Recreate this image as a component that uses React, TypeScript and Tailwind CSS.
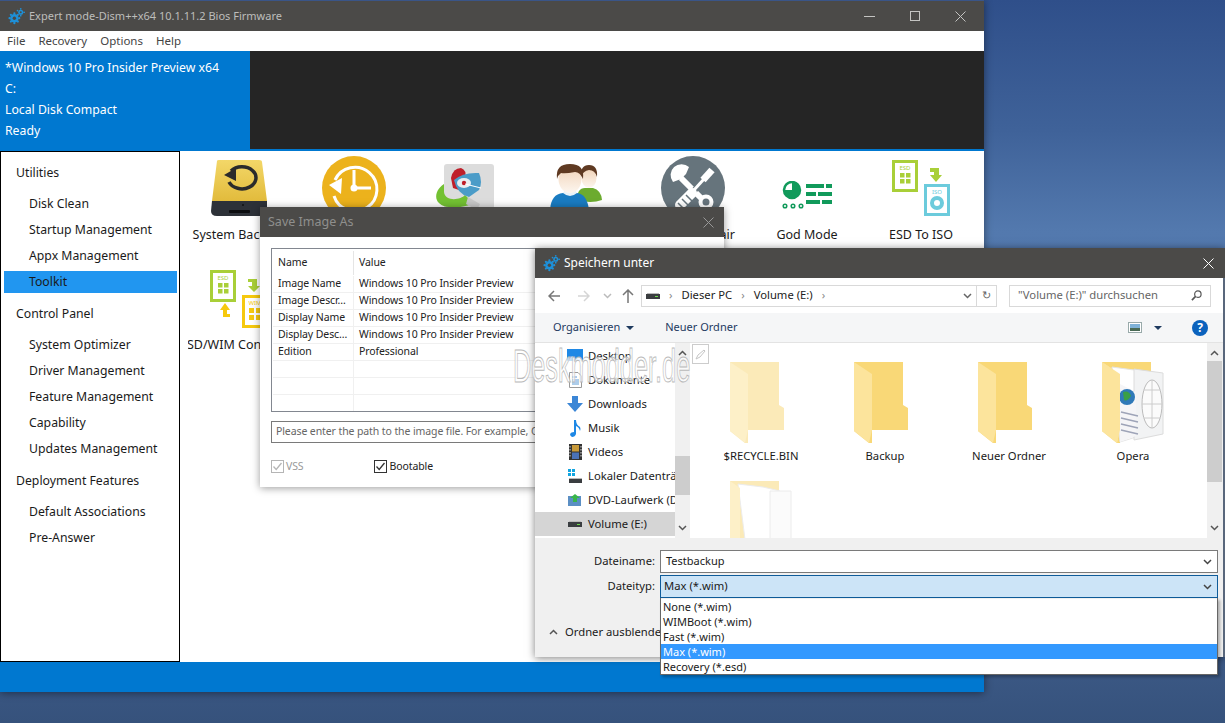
const FONT = "font-['Noto_Sans',sans-serif]";

function Gears({ size = 20 }: { size?: number }) {
  return (
    <svg width={size} height={size} viewBox="0 0 20 20">
      <g fill="#1e90d8">
        <circle cx="7.5" cy="12" r="5" />
        <circle cx="7.5" cy="6.2" r="1.3" />
        <circle cx="7.5" cy="17.8" r="1.3" />
        <circle cx="1.8" cy="12" r="1.3" />
        <circle cx="13.2" cy="12" r="1.3" />
        <circle cx="3.4" cy="8" r="1.3" />
        <circle cx="11.6" cy="8" r="1.3" />
        <circle cx="3.4" cy="16" r="1.3" />
        <circle cx="11.6" cy="16" r="1.3" />
        <circle cx="15" cy="5" r="3" />
        <circle cx="15" cy="1" r="1" />
        <circle cx="19" cy="5" r="1" />
        <circle cx="11.2" cy="3" r="1" />
        <circle cx="15" cy="9" r="1" />
      </g>
      <circle cx="7.5" cy="12" r="2" fill="#4b4a48" />
      <circle cx="15" cy="5" r="1.2" fill="#4b4a48" />
    </svg>
  );
}

function DriveIcon() {
  return (
    <svg width="57" height="56" viewBox="0 0 57 56" className="ml-[4px]">
      <defs>
        <linearGradient id="driveBody" x1="0" y1="0" x2="0" y2="1">
          <stop offset="0" stopColor="#f3d768" />
          <stop offset="1" stopColor="#e2bb3c" />
        </linearGradient>
      </defs>
      <path d="M6 1Q6 0 8 0H48Q51 0 51 2L56 41H1Z" fill="url(#driveBody)" />
      <path d="M1 41H56V51Q56 56 51 56H6Q0 56 0 51Z" fill="#2d3138" />
      <rect x="18" y="50" width="21" height="3" rx="1" fill="#0c0d10" />
      <circle cx="32" cy="45" r="1" fill="#111" />
      <path d="M18 22A14 11 0 1 0 20 11" fill="none" stroke="#2b2b2b" strokeWidth="3.5" />
      <path d="M13 15L25 8L25 21Z" fill="#2b2b2b" />
    </svg>
  );
}

function ClockIcon() {
  return (
    <svg width="64" height="64" viewBox="0 0 64 64" className="ml-[6px]">
      <circle cx="32" cy="32" r="32" fill="#ecb21c" />
      <path d="M13 24A22 22 0 1 1 12 40" fill="none" stroke="#fff" strokeWidth="3" />
      <path d="M7 29L20 22L19 38Z" fill="#fff" />
      <path d="M32 14V32H49" fill="none" stroke="#fff" strokeWidth="3" />
      <circle cx="32" cy="32" r="3.5" fill="#fff" />
    </svg>
  );
}

function BootIcon() {
  return (
    <svg width="60" height="56" viewBox="0 0 60 56" className="overflow-visible">
      <rect x="9" y="0" width="50" height="52" rx="3" fill="#dcdcdc" />
      <path d="M9 20C-3 28 -1 42 14 43C24 44 34 42 38 39L30 31C26 36 10 38 9 28Z" fill="#73c132" />
      <path d="M16 14Q18 4 26 4Q32 6 30 14L24 26L18 24Z" fill="#bf1f2a" />
      <path d="M19 16Q28 8 44 9Q48 18 44 26L34 33Q22 30 19 16Z" fill="#4b9cc8" />
      <ellipse cx="29" cy="19" rx="7" ry="5" fill="#e9eef2" />
      <circle cx="29" cy="19" r="2.2" fill="#bf1f2a" />
      <path d="M30 20L46 24" stroke="#fff" strokeWidth="1" />
      <path d="M33 33L45 40L42 46L31 40Z" fill="#c8c8c8" />
    </svg>
  );
}

function UsersIcon() {
  return (
    <svg width="60" height="56" viewBox="0 0 60 56">
      <defs>
        <linearGradient id="faceFade" x1="0" y1="0" x2="0" y2="1">
          <stop offset="0" stopColor="#f0d2b6" />
          <stop offset="1" stopColor="#fdf6ef" />
        </linearGradient>
      </defs>
      <path d="M28 36Q28 24 36 24L44 24Q52 26 53 36Q42 40 28 36Z" fill="#6cab2f" />
      <ellipse cx="40" cy="14" rx="7.5" ry="10" fill="url(#faceFade)" />
      <path d="M32 13Q31 1 40 1Q49 1 48 13Q46 6 40 6Q34 7 32 13Z" fill="#5f3a22" />
      <path d="M1 46Q2 30 14 29L28 29Q38 30 40 46Z" fill="#1a7cc2" />
      <path d="M14 29Q21 35 28 29L26 26L16 26Z" fill="#eaf3f8" />
      <ellipse cx="21" cy="15" rx="11.5" ry="14" fill="url(#faceFade)" />
      <path d="M8 15Q6 0 21 0Q36 0 34 15Q31 8 26 8Q16 10 12 9Q9 11 8 15Z" fill="#5f3a22" />
    </svg>
  );
}

function ToolsIcon() {
  return (
    <svg width="64" height="64" viewBox="0 0 64 64">
      <circle cx="32" cy="32" r="32" fill="#66747c" />
      <path d="M20 22L40 42" stroke="#fff" strokeWidth="6" />
      <path d="M28 11A11 11 0 0 0 12 26L20 23L25 18Z" fill="#fff" />
      <circle cx="45" cy="46" r="5.5" fill="none" stroke="#fff" strokeWidth="4" />
      <path d="M31 37L43 24" stroke="#66747c" strokeWidth="6" />
      <path d="M33 34L43 23" stroke="#fff" strokeWidth="3" />
      <path d="M42 24L51 14" stroke="#fff" strokeWidth="7" />
      <path d="M19 49L31 37" stroke="#fff" strokeWidth="10" strokeLinecap="round" />
      <path d="M17 47L23 53M21 43L27 49M25 39L31 45" stroke="#66747c" strokeWidth="1.5" />
    </svg>
  );
}

function GodModeIcon() {
  return (
    <svg width="50" height="28" viewBox="0 0 50 28">
      <circle cx="10" cy="9" r="8" fill="none" stroke="#119a5b" strokeWidth="2.5" />
      <path d="M10 9V1A8 8 0 1 1 2 9Z" fill="#119a5b" />
      <g fill="none" stroke="#119a5b" strokeWidth="1.5">
        <circle cx="3" cy="25" r="1.8" />
        <circle cx="11" cy="25" r="1.8" />
        <circle cx="19" cy="25" r="1.8" />
      </g>
      <g fill="#119a5b">
        <rect x="24" y="3" width="18" height="4" />
        <rect x="44" y="3" width="6" height="4" />
        <rect x="24" y="11" width="10" height="4" />
        <rect x="36" y="11" width="14" height="4" />
        <rect x="24" y="19" width="14" height="4" />
        <rect x="40" y="19" width="10" height="4" />
      </g>
    </svg>
  );
}

function TinyLabel({ x, y, color, children }: { x: number; y: number; color: string; children: string }) {
  return (
    <text x={x} y={y} fontSize="6" textAnchor="middle" fill={color}>
      {children}
    </text>
  );
}

function EsdIsoIcon() {
  return (
    <svg width="58" height="56" viewBox="0 0 58 56">
      <rect x="1.5" y="1.5" width="23" height="29" fill="#fff" stroke="#a9cf38" strokeWidth="3" />
      <TinyLabel x={13} y={10} color="#a9cf38">
        ESD
      </TinyLabel>
      <g fill="#a9cf38">
        <rect x="8" y="13" width="4.5" height="4.5" />
        <rect x="14" y="13" width="4.5" height="4.5" />
        <rect x="8" y="19" width="4.5" height="4.5" />
        <rect x="14" y="19" width="4.5" height="4.5" />
      </g>
      <path d="M38 8H47V15H50L44 22L38 15H42V12H38Z" fill="#a9cf38" />
      <rect x="33.5" y="25.5" width="23" height="29" fill="#fff" stroke="#6ccbdc" strokeWidth="3" />
      <TinyLabel x={45} y={34} color="#6ccbdc">
        ISO
      </TinyLabel>
      <circle cx="45" cy="43" r="5" fill="none" stroke="#6ccbdc" strokeWidth="4" />
    </svg>
  );
}

function EsdWimIcon() {
  return (
    <svg width="60" height="58" viewBox="0 0 60 58" className="ml-[6px]">
      <rect x="1.5" y="1.5" width="23" height="29" fill="#fff" stroke="#a9cf38" strokeWidth="3" />
      <TinyLabel x={13} y={10} color="#a9cf38">
        ESD
      </TinyLabel>
      <g fill="#a9cf38">
        <rect x="8" y="13" width="4.5" height="4.5" />
        <rect x="14" y="13" width="4.5" height="4.5" />
        <rect x="8" y="19" width="4.5" height="4.5" />
        <rect x="14" y="19" width="4.5" height="4.5" />
      </g>
      <path d="M13 47V40H10L15 33L20 40H17V44H20V47Z" fill="#f6c90e" />
      <path d="M38 9H47V16H50L44 22L38 16H42V12H38Z" fill="#a9cf38" />
      <rect x="33.5" y="26.5" width="24" height="30" fill="#fff" stroke="#f6c90e" strokeWidth="3" />
      <TinyLabel x={45} y={35} color="#f6c90e">
        WIM
      </TinyLabel>
      <g fill="#f6c90e">
        <rect x="39" y="38" width="5" height="5" />
        <rect x="46" y="38" width="5" height="5" />
        <rect x="39" y="45" width="5" height="5" />
        <rect x="46" y="45" width="5" height="5" />
      </g>
    </svg>
  );
}

type FolderKind = "plain" | "pale" | "opera" | "papers";

function Folder({ kind = "plain" }: { kind?: FolderKind }) {
  const pale = kind === "pale" || kind === "papers";
  const flap = <path d="M0 0L18 12V68L15 81L0 69Z" fill={pale ? "#fdf0c8" : "#fce49c"} />;
  return (
    <svg width="62" height="82" viewBox="0 0 62 82">
      <path d="M0 0H49V43L54 46V68H18V81H15L0 69Z" fill={pale ? "#fbeab8" : "#f9d877"} />
      {kind === "papers" && (
        <>
          <path d="M8 3L33 6L50 10V82H18Z" fill="#fff" stroke="#ececec" />
          <path d="M40 10H61V82H40Z" fill="#fbfbfb" stroke="#ececec" />
        </>
      )}
      {kind === "papers" ? null : flap}
      {kind === "opera" && (
        <>
          <path d="M10 5L32 8L50 12V70L18 80Z" fill="#fff" stroke="#e5e5e5" />
          <path d="M32 7L61 11V72L32 78Z" fill="#f2f3f4" stroke="#dcdcdc" />
          <ellipse cx="50" cy="42" rx="10" ry="24" fill="#fbfbfb" stroke="#bbb" />
          <path d="M40 42H60M50 18V66M42 28H58M42 56H58" stroke="#ccc" fill="none" />
          <path d="M18 22L34 30V74L18 80Z" fill="#f5f5f7" />
          <circle cx="25" cy="35" r="8" fill="#2f79b8" />
          <path d="M21 30Q27 28 29 34Q25 40 22 38Z" fill="#3a9f46" />
          <path d="M19 50L36 54M19 56L36 60M19 62L36 66M19 68L36 72" stroke="#9ea4b8" strokeWidth="1.5" />
          {flap}
        </>
      )}
      {kind === "papers" && <path d="M0 0L10 7V72L0 69Z" fill="#fdf0c8" />}
    </svg>
  );
}

function NavIcon({ kind }: { kind: string }) {
  if (kind === "desktop")
    return (
      <svg width="16" height="14" viewBox="0 0 16 14">
        <rect width="16" height="12" fill="#1e88e5" />
        <path d="M0 12L5 7L9 10L12 8L16 12Z" fill="#bfe0fa" />
      </svg>
    );
  if (kind === "docs")
    return (
      <svg width="13" height="16" viewBox="0 0 13 16">
        <path d="M.5.5H9L12.5 4V15.5H.5Z" fill="#fff" stroke="#9a9a9a" />
        <path d="M3 5H8M3 8H10M3 10H10M3 12H10" stroke="#5b9bd5" />
      </svg>
    );
  if (kind === "down")
    return (
      <svg width="16" height="16" viewBox="0 0 16 16">
        <path d="M5 0H11V7H16L8 16L0 7H5Z" fill="#3b86d6" />
      </svg>
    );
  if (kind === "music")
    return (
      <svg width="11" height="17" viewBox="0 0 11 17">
        <path d="M4 0H6Q6 5 10 7Q11 9 10 11Q9 7 6 6V14Q5 17 2 17Q0 16 0 14Q1 12 4 12Z" fill="#1e88e5" />
      </svg>
    );
  if (kind === "video")
    return (
      <svg width="13" height="16" viewBox="0 0 13 16">
        <rect width="13" height="16" fill="#333" />
        <rect x="3" y="1" width="7" height="6.5" fill="#c89a3a" />
        <rect x="3" y="8.5" width="7" height="6.5" fill="#4a72b8" />
        <path d="M1 2V14M12 2V14" stroke="#ddd" strokeDasharray="1.5 1.5" />
      </svg>
    );
  if (kind === "win")
    return (
      <svg width="15" height="14" viewBox="0 0 15 14">
        <rect y="0" width="3" height="3" fill="#12a5e0" />
        <rect x="4" y="0" width="3" height="3" fill="#12a5e0" />
        <rect y="4" width="3" height="3" fill="#12a5e0" />
        <rect x="4" y="4" width="3" height="3" fill="#12a5e0" />
        <path d="M1 9H14V10H1Z" fill="#b8b8b8" />
        <rect x="1" y="10" width="13" height="4" fill="#3a3d40" />
      </svg>
    );
  if (kind === "dvd")
    return (
      <svg width="14" height="13" viewBox="0 0 14 13">
        <rect y="2" width="13" height="10" fill="#5b8fc4" />
        <path d="M7 0L12 4H9V8H5V4H2Z" fill="#39b54a" />
      </svg>
    );
  return (
    <svg width="14" height="6" viewBox="0 0 14 6">
      <path d="M1 0H13V1H1Z" fill="#bbb" />
      <rect y="1" width="14" height="5" fill="#3a3d40" />
      <rect x="9" y="3" width="3" height="1" fill="#6fdc4c" />
    </svg>
  );
}

const menus = ["File", "Recovery", "Options", "Help"];
const statusLines = ["*Windows 10 Pro Insider Preview x64", "C:", "Local Disk Compact", "Ready"];

const sidebar = [
  { title: "Utilities", items: ["Disk Clean", "Startup Management", "Appx Management", "Toolkit"] },
  {
    title: "Control Panel",
    items: ["System Optimizer", "Driver Management", "Feature Management", "Capability", "Updates Management"],
  },
  { title: "Deployment Features", items: ["Default Associations", "Pre-Answer"] },
];

const tools = [
  { label: "System Backup", icon: <DriveIcon />, top: "pt-[9px]" },
  { label: "System Restore", icon: <ClockIcon />, top: "pt-[5px]" },
  { label: "Boot Manager", icon: <BootIcon />, top: "pt-[13px]" },
  { label: "Account Manager", icon: <UsersIcon />, top: "pt-[13px]" },
  { label: "System Repair", icon: <ToolsIcon />, top: "pt-[5px]" },
  { label: "God Mode", icon: <GodModeIcon />, top: "pt-[30px]" },
  { label: "ESD To ISO", icon: <EsdIsoIcon />, top: "pt-[9px]" },
];

const imageRows = [
  ["Image Name", "Windows 10 Pro Insider Preview"],
  ["Image Descr...", "Windows 10 Pro Insider Preview"],
  ["Display Name", "Windows 10 Pro Insider Preview"],
  ["Display Desc...", "Windows 10 Pro Insider Preview"],
  ["Edition", "Professional"],
  ["", ""],
  ["", ""],
  ["", ""],
];

const navItems = [
  ["desktop", "Desktop"],
  ["docs", "Dokumente"],
  ["down", "Downloads"],
  ["music", "Musik"],
  ["video", "Videos"],
  ["win", "Lokaler Datenträ"],
  ["dvd", "DVD-Laufwerk (D"],
  ["drive", "Volume (E:)"],
];

const fileTypes = ["None (*.wim)", "WIMBoot (*.wim)", "Fast (*.wim)", "Max (*.wim)", "Recovery (*.esd)"];

function Chevron({ up = false, color = "#555" }: { up?: boolean; color?: string }) {
  return (
    <svg width="9" height="6" viewBox="0 0 9 6">
      <path d={up ? "M1 5L4.5 1.5L8 5" : "M1 1L4.5 4.5L8 1"} fill="none" stroke={color} strokeWidth="1.5" />
    </svg>
  );
}

function CloseX({ color, size = 11 }: { color: string; size?: number }) {
  return (
    <svg width={size} height={size} viewBox="0 0 11 11">
      <path d="M.5.5L10.5 10.5M10.5.5L.5 10.5" stroke={color} strokeWidth="1" />
    </svg>
  );
}

function CheckBox({ disabled = false }: { disabled?: boolean }) {
  const c = disabled ? "#b5b5b5" : "#333";
  return (
    <svg width="13" height="13" viewBox="0 0 13 13">
      <rect x=".5" y=".5" width="12" height="12" fill="#fff" stroke={c} />
      <path d="M2.5 6.5L5.2 9.5L10.5 3" fill="none" stroke={c} strokeWidth="1.3" />
    </svg>
  );
}

function MainWindow() {
  return (
    <div className="absolute left-0 top-0 flex h-[692px] w-[984px] flex-col bg-white shadow-[0_1px_8px_rgba(0,0,0,0.45)]">
      <div className="h-px bg-[#3a5588]" />
      <div className="flex h-[30px] items-center bg-[#4b4a48] pl-[8px]">
        <Gears size={17} />
        <span className="ml-[4px] text-[11px] text-[#bdbdbb]">Expert mode-Dism++x64 10.1.11.2 Bios Firmware</span>
        <div className="ml-auto flex items-center gap-[35px] pr-[18px]">
          <div className="h-px w-[11px] bg-[#c4c4c2]" />
          <div className="size-[10px] border border-[#c4c4c2]" />
          <CloseX color="#c4c4c2" />
        </div>
      </div>
      <div className="flex h-[20px] items-center gap-[13px] pl-[7px] text-[11.5px] text-[#444]">
        {menus.map((m) => (
          <span key={m}>{m}</span>
        ))}
      </div>
      <div className="flex h-[100px] border-b-2 border-[#0078d0] bg-[#0078d0]">
        <div className="flex w-[250px] flex-col pl-[5px] pt-[6px] text-[12.25px] leading-[21px] text-white">
          {statusLines.map((l) => (
            <div key={l}>{l}</div>
          ))}
        </div>
        <div className="flex-1 bg-[#252525]" />
      </div>
      <div className="flex flex-1">
        <div className="w-[180px] border border-black pl-[3px] pr-[2px] pt-[9px] text-[12.25px] text-[#1a1a1a]">
          {sidebar.map((s) => (
            <div key={s.title} className="mb-[9px]">
              <div className="flex h-[24px] items-center pl-[12px]">{s.title}</div>
              <div className="mt-[8px]">
                {s.items.map((item) => (
                  <div
                    key={item}
                    className={`flex h-[22px] items-center pl-[25px] [&:not(:last-child)]:mb-[4px] ${
                      item === "Toolkit" ? "bg-[#2196f0]" : ""
                    }`}
                  >
                    {item}
                  </div>
                ))}
              </div>
            </div>
          ))}
        </div>
        <div className="flex-1 text-[12.5px] text-[#1a1a1a]">
          <div className="flex">
            {tools.map((t) => (
              <div key={t.label} className="flex h-[110px] w-[114px] flex-col items-center">
                <div className={`flex h-[75px] items-start ${t.top}`}>{t.icon}</div>
                <div className="whitespace-nowrap leading-[17px]">{t.label}</div>
              </div>
            ))}
          </div>
          <div className="flex h-[96px] w-[114px] flex-col items-center overflow-hidden pt-[9px]">
            <div className="flex h-[66px] items-start">
              <EsdWimIcon />
            </div>
            <div className="flex w-[106px] self-end overflow-hidden whitespace-nowrap leading-[17px]">
              <span className="-ml-[8px] shrink-0">ESD/WIM Converter</span>
            </div>
          </div>
        </div>
      </div>
      <div className="h-[30px] bg-[#0078d0]" />
    </div>
  );
}

function SaveImageDialog() {
  return (
    <div className="absolute left-[260px] top-[207px] h-[280px] w-[464px] bg-white shadow-[0_1px_8px_rgba(0,0,0,0.4)]">
      <div className="flex h-[30px] items-center justify-between bg-[#4b4a48] pl-[8px] pr-[10px]">
        <span className="text-[12.5px] text-[#8f8f8d]">Save Image As</span>
        <CloseX color="#999" />
      </div>
      <div className="px-[11px] pt-[11px] text-[10.5px] tracking-[-0.1px] text-[#222]">
        <div className="h-[164px] overflow-hidden border border-[#828790] pl-[1px]">
          <div className="flex h-[27px] items-center pr-[1px]">
            <div className="flex h-[24px] w-[81px] items-center border-r border-[#e5e5e5] pl-[5px]">Name</div>
            <div className="pl-[5px]">Value</div>
          </div>
          {imageRows.map(([name, value], i) => (
            <div key={i} className="flex h-[17px] items-center border-b border-[#f0f0f0]">
              <div className="flex h-full w-[81px] items-center border-r border-[#f0f0f0] pl-[5px] whitespace-nowrap">
                {name}
              </div>
              <div className="pl-[5px] whitespace-nowrap">{value}</div>
            </div>
          ))}
        </div>
        <div className="mt-[9px] flex h-[22px] items-center overflow-hidden border border-[#7a7a7a] pl-[4px] text-[#666] whitespace-nowrap">
          Please enter the path to the image file. For example, C:\Backup\Install.wim
        </div>
        <div className="mt-[16px] flex items-center">
          <CheckBox disabled />
          <span className="ml-[2px] text-[#999]">VSS</span>
          <div className="ml-[70px]">
            <CheckBox />
          </div>
          <span className="ml-[3px]">Bootable</span>
        </div>
      </div>
    </div>
  );
}

function FolderCell({ name, kind }: { name: string; kind?: FolderKind }) {
  return (
    <div className="flex w-[124px] flex-col items-center">
      <Folder kind={kind} />
      <div className="mt-[4px] text-[11.25px] leading-[16px] text-[#1a1a1a]">{name}</div>
    </div>
  );
}

function SaveAsDialog() {
  return (
    <div className="absolute left-[535px] top-[248px] flex h-[409px] w-[690px] flex-col text-[11.25px] shadow-[0_1px_8px_rgba(0,0,0,0.5)]">
      <div className="flex h-[30px] shrink-0 items-center justify-between bg-[#4b4a48] pl-[8px] pr-[11px]">
        <div className="flex items-center gap-[4px]">
          <Gears size={17} />
          <span className="text-[12px] text-white">Speichern unter</span>
        </div>
        <CloseX color="#fff" />
      </div>
      <div className="flex flex-1 flex-col border-r-2 border-[#59677c] bg-[#f0f0f0]">
        <div className="flex h-[35px] items-center bg-white pl-[13px] pr-[12px]">
          <svg width="12" height="12" viewBox="0 0 12 12">
            <path d="M6 1L1 6L6 11M1 6H12" fill="none" stroke="#777" strokeWidth="1.5" />
          </svg>
          <svg width="12" height="12" viewBox="0 0 12 12" className="ml-[18px]">
            <path d="M6 1L11 6L6 11M11 6H0" fill="none" stroke="#d5d5d5" strokeWidth="1.5" />
          </svg>
          <div className="ml-[13px]">
            <Chevron color="#bbb" />
          </div>
          <svg width="12" height="14" viewBox="0 0 12 14" className="ml-[10px]">
            <path d="M1 6L6 1L11 6M6 1V14" fill="none" stroke="#777" strokeWidth="1.5" />
          </svg>
          <div className="ml-[7px] flex h-[22px] w-[356px] items-center border border-[#d9d9d9] pl-[4px] text-[#222]">
            <NavIcon kind="drive" />
            <span className="mx-[9px] text-[#888]">›</span>
            <span>Dieser PC</span>
            <span className="mx-[9px] text-[#888]">›</span>
            <span>Volume (E:)</span>
            <span className="mx-[9px] text-[#888]">›</span>
            <div className="ml-auto flex h-full items-center">
              <Chevron color="#666" />
              <div className="ml-[4px] flex h-full w-[20px] items-center justify-center border-l border-[#d9d9d9] text-[#666]">
                ↻
              </div>
            </div>
          </div>
          <div className="ml-[12px] flex h-[22px] flex-1 items-center justify-between border border-[#d9d9d9] pl-[8px] pr-[8px] text-[#666]">
            <span>"Volume (E:)" durchsuchen</span>
            <svg width="11" height="11" viewBox="0 0 12 12">
              <circle cx="7.5" cy="4.5" r="3.5" fill="none" stroke="#555" strokeWidth="1.3" />
              <path d="M5 7L1 11" stroke="#555" strokeWidth="1.8" />
            </svg>
          </div>
        </div>
        <div className="flex h-[30px] items-center border-b border-[#e3e3e3] bg-[#f5f6f7] pl-[18px] pr-[15px] text-[11px] text-[#1e3a5f]">
          <span>Organisieren</span>
          <span className="ml-[6px] h-0 w-0 border-x-[4px] border-t-[4px] border-x-transparent border-t-[#1e3a5f]" />
          <span className="ml-[31px]">Neuer Ordner</span>
          <div className="ml-auto flex items-center">
            <svg width="14" height="11" viewBox="0 0 14 11">
              <rect x=".5" y=".5" width="13" height="10" fill="#fff" stroke="#9aa" />
              <rect x="2" y="2" width="10" height="4" fill="#7fb2d8" />
              <rect x="2" y="6" width="10" height="3" fill="#4a6a55" />
            </svg>
            <span className="ml-[12px] h-0 w-0 border-x-[4px] border-t-[4px] border-x-transparent border-t-[#1e3a5f]" />
            <div className="ml-[30px] flex size-[16px] items-center justify-center rounded-full bg-[#0b62bd] text-[12px] font-bold text-white">
              ?
            </div>
          </div>
        </div>
        <div className="flex h-[195px] bg-white">
          <div className="w-[140px] shrink-0 overflow-hidden pt-px">
            {navItems.map(([kind, label]) => (
              <div
                key={label}
                className={`flex h-[24px] items-center whitespace-nowrap ${kind === "drive" ? "bg-[#d5d5d5]" : ""}`}
              >
                <div className="ml-[32px] mr-[5px] flex w-[16px] shrink-0 justify-center">
                  <NavIcon kind={kind} />
                </div>
                <span className="text-[#1a1a1a]">{label}</span>
              </div>
            ))}
          </div>
          <div className="relative flex w-[15px] shrink-0 flex-col items-center justify-between bg-[#f0f0f0] py-[7px]">
            <Chevron up color="#555" />
            <div className="absolute left-0 top-[113px] h-[39px] w-[15px] bg-[#cdcdcd]" />
            <Chevron color="#555" />
          </div>
          <div className="flex-1 overflow-hidden pl-[9px] pt-[19px]">
            <div className="flex">
              <FolderCell name="$RECYCLE.BIN" kind="pale" />
              <FolderCell name="Backup" />
              <FolderCell name="Neuer Ordner" />
              <FolderCell name="Opera" kind="opera" />
            </div>
            <div className="mt-[17px] w-[124px] pl-[31px]">
              <Folder kind="papers" />
            </div>
          </div>
          <div className="relative flex w-[15px] shrink-0 flex-col items-center justify-between bg-[#f0f0f0] py-[7px]">
            <Chevron up color="#555" />
            <div className="absolute left-0 top-[18px] h-[121px] w-[15px] bg-[#cdcdcd]" />
            <Chevron color="#555" />
          </div>
          <div className="w-px bg-[#f0f0f0]" />
        </div>
        <div className="flex-1 pr-[5px] pt-[12px] text-[#1a1a1a]">
          <div className="flex h-[23px] items-center">
            <span className="w-[120px] text-right">Dateiname:</span>
            <div className="ml-[5px] flex h-full flex-1 items-center justify-between border border-[#7a7a7a] bg-white pl-[5px] pr-[5px]">
              <span className="text-[11px]">Testbackup</span>
              <Chevron color="#444" />
            </div>
          </div>
          <div className="mt-[2px] flex h-[23px] items-center">
            <span className="w-[120px] text-right">Dateityp:</span>
            <div className="ml-[5px] flex h-full flex-1 items-center justify-between border border-[#0f5c9a] bg-[#cce4f7] pl-[3px] pr-[5px]">
              <span>Max (*.wim)</span>
              <Chevron color="#444" />
            </div>
          </div>
          <div className="mt-[26px] flex items-center pl-[14px]">
            <Chevron up color="#555" />
            <span className="ml-[7px]">Ordner ausblenden</span>
          </div>
        </div>
      </div>
    </div>
  );
}

function TypeDropdown() {
  return (
    <div className="absolute left-[660px] top-[598px] w-[558px] border border-t-0 border-[#666] pt-px text-[11px] leading-[15px] text-[#1a1a1a] shadow-[2px_2px_3px_rgba(0,0,0,0.3)]">
      <div className="bg-white">
        {fileTypes.map((t) => (
          <div key={t} className={`pl-[2px] ${t === "Max (*.wim)" ? "bg-[#3399ff] text-white" : ""}`}>
            {t}
          </div>
        ))}
      </div>
    </div>
  );
}

function Watermark() {
  return (
    <>
      <div className="pointer-events-none absolute left-[513px] top-[341px] origin-left scale-x-[0.55] whitespace-nowrap font-['Liberation_Sans',sans-serif] text-[46px] leading-[50px] text-white/70 [-webkit-text-stroke:1px_#b9b9b9]">
        Deskmodder.de
      </div>
      <div className="absolute left-[692px] top-[344px] flex h-[20px] w-[17px] items-center justify-center border border-[#ccc] bg-white/70">
        <svg width="11" height="11" viewBox="0 0 11 11">
          <path d="M1 10L3 6L9 1L10 2L5 8Z" fill="none" stroke="#c5c5c5" />
        </svg>
      </div>
    </>
  );
}

export default function App() {
  return (
    <div
      className={`relative h-[723px] w-[1225px] overflow-hidden bg-[linear-gradient(180deg,#2f4f8a_0%,#3f6299_18%,#5379ae_32%,#4a6a9c_70%,#36527c_100%)] ${FONT}`}
    >
      <MainWindow />
      <SaveImageDialog />
      <SaveAsDialog />
      <TypeDropdown />
      <Watermark />
    </div>
  );
}
